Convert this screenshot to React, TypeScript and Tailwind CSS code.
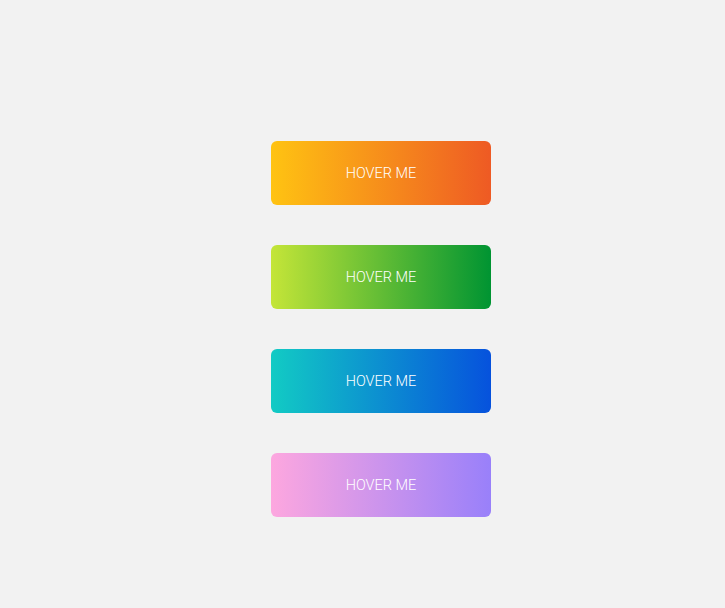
const buttons = [
  "bg-linear-to-r/srgb from-[#FFC312] to-[#EE5A24]",
  "bg-linear-to-r/srgb from-[#C4E538] to-[#009432]",
  "bg-linear-to-r/srgb from-[#12CBC4] to-[#0652DD]",
  "bg-linear-to-r/srgb from-[#FDA7DF] to-[#9980FA]",
]

export default function App() {
  return (
    <div className="min-h-[608px] bg-[#f2f2f2] flex justify-center pt-[141px] pl-[37px]">
      <div className="flex flex-col gap-10">
        {buttons.map((bg, i) => (
          <button
            key={i}
            className={`${bg} w-[220px] h-16 pt-[3px] rounded-md text-white text-[14.5px] leading-none font-light font-['Roboto',sans-serif]`}
          >
            HOVER ME
          </button>
        ))}
      </div>
    </div>
  )
}
